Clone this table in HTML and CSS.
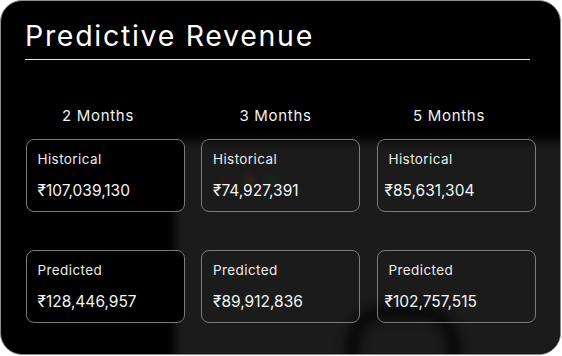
FILE: index.html
```html
<!DOCTYPE html>
<html>
<head>
<meta charset="utf-8">
<link rel="stylesheet" href="styles.css">
</head>
<body>
<div class="card">
  <div class="backdrop" aria-hidden="true">
    <div class="bg-panel"></div>
    <div class="bg-dot red"></div>
    <div class="bg-dot orange"></div>
    <div class="bg-dot green"></div>
    <div class="bg-shape"></div>
  </div>
  <div class="content">
    <h1 class="title">Predictive Revenue</h1>
    <div class="grid">
      <div class="month m1">2 Months</div>
      <div class="month m2">3 Months</div>
      <div class="month m3">5 Months</div>

      <div class="box b-dark"><div class="label">Historical</div><div class="value">₹107,039,130</div></div>
      <div class="box"><div class="label">Historical</div><div class="value">₹74,927,391</div></div>
      <div class="box b-last"><div class="label">Historical</div><div class="value">₹85,631,304</div></div>

      <div class="box b-dark row2"><div class="label">Predicted</div><div class="value">₹128,446,957</div></div>
      <div class="box row2"><div class="label">Predicted</div><div class="value">₹89,912,836</div></div>
      <div class="box b-last row2"><div class="label">Predicted</div><div class="value">₹102,757,515</div></div>
    </div>
  </div>
</div>
</body>
</html>
```
FILE: styles.css
```css
html, body {
  margin: 0;
  padding: 0;
  background: #ffffff;
}
body {
  font-family: "Inter", "Open Sans", sans-serif;
  color: #ffffff;
}
.card {
  position: relative;
  box-sizing: border-box;
  width: 561px;
  height: 355px;
  border: 1.5px solid #8c8c8c;
  border-radius: 22px;
  background: #000;
  overflow: hidden;
}
.backdrop {
  position: absolute;
  inset: 0;
  overflow: hidden;
}
.bg-panel {
  position: absolute;
  left: 174px;
  top: 140px;
  width: 420px;
  height: 260px;
  background: #1b1b1b;
  filter: blur(5px);
}
.bg-dot {
  position: absolute;
  top: 174px;
  width: 11px;
  height: 11px;
  border-radius: 50%;
  filter: blur(3px);
  opacity: 0.35;
}
.bg-dot.red { left: 219px; background: #5a0a0a; }
.bg-dot.orange { left: 243px; background: #5a3008; }
.bg-dot.green { left: 265px; background: #0a4a10; }
.bg-shape {
  position: absolute;
  left: 345px;
  top: 305px;
  width: 90px;
  height: 70px;
  border-radius: 40px 40px 0 0;
  border: 12px solid #050505;
  border-bottom: none;
  filter: blur(6px);
}
.content {
  position: relative;
  padding: 18px 30px 0 24px;
}
.title {
  margin: 0;
  font-size: 28.5px;
  font-weight: 400;
  line-height: 34px;
  letter-spacing: 1.7px;
  padding-left: 0;
  padding-bottom: 6px;
  border-bottom: 1px solid #e6e6e6;
}
.grid {
  display: grid;
  grid-template-columns: repeat(3, 159px);
  column-gap: 16.5px;
  padding-left: 0.5px;
  margin-top: 46px;
}
.month {
  font-size: 15px;
  line-height: 20px;
  letter-spacing: 0.7px;
  text-align: center;
  color: #f2f2f2;
  margin-bottom: 13px;
}
.m1 { padding-right: 14px; }
.m2 { padding-right: 10px; }
.m3 { padding-right: 14px; }
.box {
  box-sizing: border-box;
  height: 73px;
  border: 1px solid #7a7a7a;
  border-radius: 8px;
  padding: 10px 11px 0 11px;
}
.b-dark { background: #000; }
.row2 { margin-top: 38px; }
.label {
  font-size: 13.5px;
  line-height: 18px;
  letter-spacing: 0.4px;
  color: #ececec;
}
.value {
  font-size: 15.5px;
  line-height: 20px;
  margin-top: 13px;
  color: #f4f4f4;
}
.b-last .value { margin-left: -4px; }
```
